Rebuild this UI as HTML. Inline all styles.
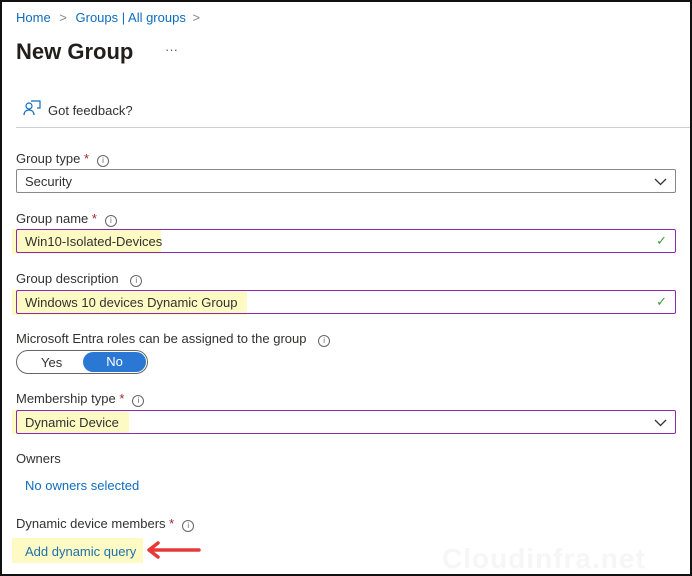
<!DOCTYPE html><html><head><style>
*{box-sizing:border-box;margin:0;padding:0}
body{width:692px;height:576px;overflow:hidden;background:#fff;font-family:"Liberation Sans",sans-serif;font-size:13px;color:#323130;position:relative}
.a{position:absolute}
.blue{color:#0f6cbd}
.lbl{position:absolute;left:16px;font-size:13px}
.star{color:#a4262c}
.i{display:inline-block;width:12px;height:12px;border:1px solid #666;border-radius:50%;font-size:8px;text-align:center;line-height:10px;color:#666;margin-left:8px;vertical-align:0}
.box{position:absolute;left:16px;width:660px;height:24px;border:1px solid #8a8886;border-radius:2px}
.pur{border-color:#8a2ab0}
.hl{position:absolute;background:#fdfbc3}
.t{position:absolute;left:8px;top:4px}
.chk{position:absolute;right:8px;top:3px;color:#3e9b3a;font-size:13px}
</style></head><body>
<div class="a" style="left:0;top:0;width:692px;height:576px;border:2px solid #111;z-index:5"></div>
<div class="a blue" style="left:16px;top:10px;font-size:13px">Home <span style="color:#888;margin:0 5px">&gt;</span> Groups | All groups <span style="color:#888;margin-left:3px">&gt;</span></div>
<div class="a" style="left:16px;top:39px;font-size:22px;font-weight:bold;color:#201f1e">New Group</div>
<div class="a" style="left:165px;top:42px;color:#555">···</div>
<svg class="a" style="left:23px;top:100px" width="18" height="16" viewBox="0 0 18 16"><circle cx="6" cy="6" r="3" fill="none" stroke="#0f6cbd" stroke-width="1.2"/><path d="M1 15c0-3 2-5 5-5s5 2 5 5M8 1h9v7h-3" fill="none" stroke="#0f6cbd" stroke-width="1.2"/></svg>
<div class="a" style="left:48px;top:103px">Got feedback?</div>
<div class="a" style="left:16px;top:127px;width:676px;height:1px;background:#d0d0d0"></div>

<div class="lbl" style="top:151px">Group type <span class="star">*</span><span class="i">i</span></div>
<div class="box" style="top:169px"><span class="t">Security</span><svg class="a" style="right:8px;top:8px" width="13" height="8"><path d="M1 1l5.5 5.5L12 1" fill="none" stroke="#333" stroke-width="1.3"/></svg></div>

<div class="lbl" style="top:211px">Group name <span class="star">*</span><span class="i">i</span></div>
<div class="hl" style="left:12px;top:229px;width:149px;height:25px"></div>
<div class="box pur" style="top:229px"><span class="t">Win10-Isolated-Devices</span><span class="chk">✓</span></div>

<div class="lbl" style="top:271px">Group description <span class="i">i</span></div>
<div class="hl" style="left:12px;top:290px;width:235px;height:25px"></div>
<div class="box pur" style="top:290px"><span class="t">Windows 10 devices Dynamic Group</span><span class="chk">✓</span></div>

<div class="lbl" style="top:331px">Microsoft Entra roles can be assigned to the group <span class="i">i</span></div>
<div class="a" style="left:16px;top:350px;width:132px;height:24px;border:1px solid #666;border-radius:12px"></div>
<div class="a" style="left:41px;top:355px">Yes</div>
<div class="a" style="left:83px;top:352px;width:63px;height:20px;background:#2b78d4;border-radius:10px;color:#fff;text-align:center;line-height:20px">No</div>

<div class="lbl" style="top:391px">Membership type <span class="star">*</span><span class="i">i</span></div>
<div class="hl" style="left:12px;top:410px;width:117px;height:24px"></div>
<div class="box pur" style="top:410px"><span class="t">Dynamic Device</span><svg class="a" style="right:8px;top:8px" width="13" height="8"><path d="M1 1l5.5 5.5L12 1" fill="none" stroke="#333" stroke-width="1.3"/></svg></div>

<div class="lbl" style="top:451px">Owners</div>
<div class="a blue" style="left:25px;top:478px">No owners selected</div>
<div class="lbl" style="top:516px">Dynamic device members <span class="star">*</span><span class="i">i</span></div>
<div class="hl" style="left:12px;top:538px;width:131px;height:25px"></div>
<div class="a" style="left:25px;top:544px;color:#1f6fb0">Add dynamic query</div>
<svg class="a" style="left:144px;top:540px" width="58" height="20"><path d="M55 10H6M14 3L5 10l9 7" fill="none" stroke="#e8393a" stroke-width="3.5" stroke-linecap="round" stroke-linejoin="round"/></svg>
<div class="a" style="left:442px;top:543px;font-size:28px;font-weight:bold;color:#f6f6f6;letter-spacing:1px">Cloudinfra.net</div>
</body></html>
